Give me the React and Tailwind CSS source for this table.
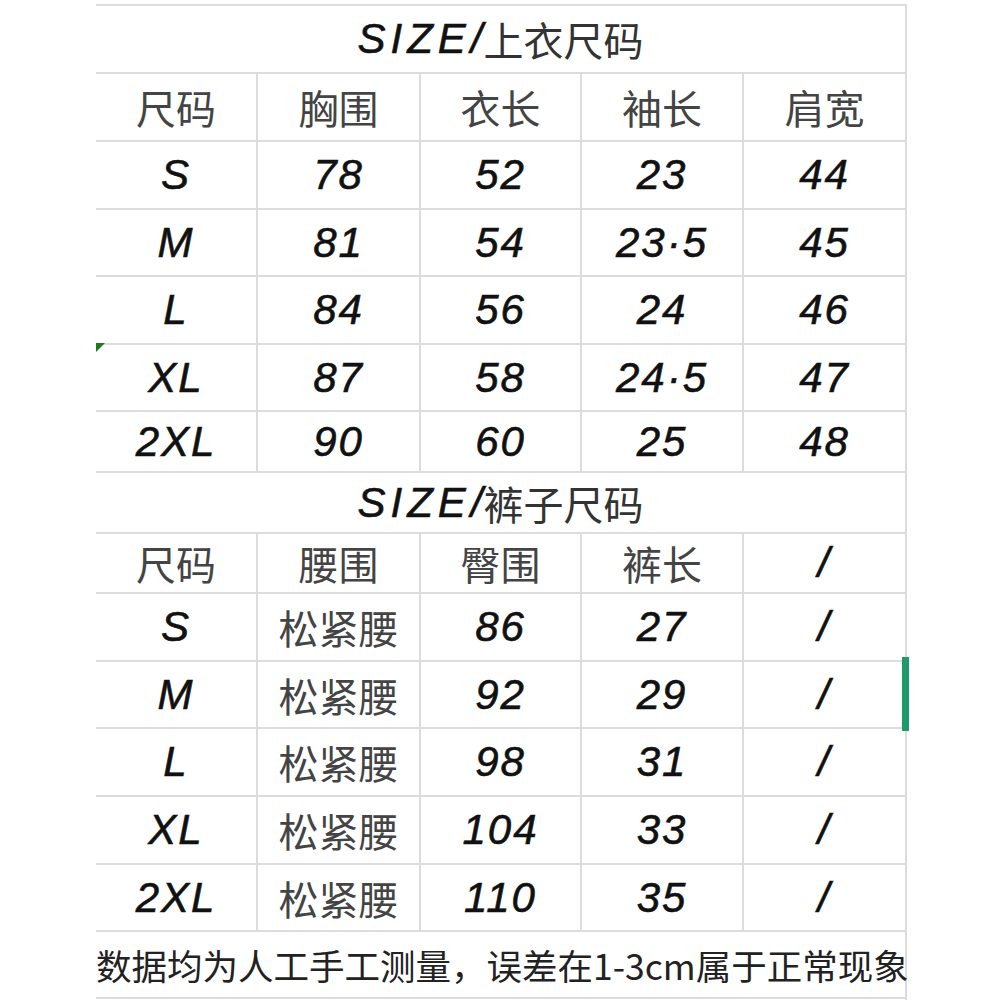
import React from "react";

const LATIN =
  "font-['Liberation_Sans',Arial,sans-serif] italic text-[42px] leading-none text-[#111] tracking-[2px] [-webkit-text-stroke:0.6px_#111]";
const CJK = "font-['Noto_Sans_CJK_SC','Noto_Sans',sans-serif] text-[40px] leading-none text-[#444]";

function Cell({ children, first, kind }) {
  return (
    <div
      className={`flex items-center justify-center border-b-2 border-[#dcdcdc] ${first ? "" : "border-l-2"} ${
        kind === "cjk" ? CJK : LATIN
      }`}
    >
      {children}
    </div>
  );
}

function Row({ h, cells }) {
  return (
    <div className={`grid grid-cols-[160px_163px_161px_162px_163px] ${h}`}>
      {cells.map((c, i) => (
        <Cell key={i} first={i === 0} kind={c.k}>
          {c.t}
        </Cell>
      ))}
    </div>
  );
}

function Title({ h, zh }) {
  return (
    <div className={`flex items-center justify-center border-b-2 border-[#dcdcdc] ${h}`}>
      <span className="font-['Liberation_Sans',Arial,sans-serif] italic text-[42px] leading-none text-[#111] tracking-[5px] mr-[-4px] [-webkit-text-stroke:0.6px_#111]">
        SIZE/
      </span>
      <span className="font-['Noto_Sans_CJK_SC','Noto_Sans',sans-serif] text-[40px] leading-none text-[#333]">{zh}</span>
    </div>
  );
}

const L = (t) => ({ t, k: "latin" });
const C = (t) => ({ t, k: "cjk" });

export default function App() {
  const top = [
    ["S", "78", "52", "23", "44", "h-[68px]"],
    ["M", "81", "54", "23·5", "45", "h-[67px]"],
    ["L", "84", "56", "24", "46", "h-[68px]"],
    ["XL", "87", "58", "24·5", "47", "h-[67px]"],
    ["2XL", "90", "60", "25", "48", "h-[61px]"],
  ];
  const bottom = [
    ["S", "86", "27", "h-[68px]"],
    ["M", "92", "29", "h-[67px]"],
    ["L", "98", "31", "h-[68px]"],
    ["XL", "104", "33", "h-[68px]"],
    ["2XL", "110", "35", "h-[67px]"],
  ];
  return (
    <div className="relative w-[1000px] h-[1000px] bg-white overflow-hidden">
      <div className="pl-[96px] pt-[4px]">
        <div className="w-[811px] h-[996px] border-t-2 border-r-2 border-[#dcdcdc]">
          <Title h="h-[68px]" zh="上衣尺码" />
          <Row h="h-[68px]" cells={[C("尺码"), C("胸围"), C("衣长"), C("袖长"), C("肩宽")]} />
          {top.map((r, i) => (
            <Row key={i} h={r[5]} cells={[L(r[0]), L(r[1]), L(r[2]), L(r[3]), L(r[4])]} />
          ))}
          <Title h="h-[61px]" zh="裤子尺码" />
          <Row h="h-[60px]" cells={[C("尺码"), C("腰围"), C("臀围"), C("裤长"), L("/")]} />
          {bottom.map((r, i) => (
            <Row key={i} h={r[3]} cells={[L(r[0]), C("松紧腰"), L(r[1]), L(r[2]), L("/")]} />
          ))}
          <div className="flex items-center border-b-2 border-[#dcdcdc] h-[67px]">
            <span className="whitespace-nowrap font-['Noto_Sans_CJK_SC','Noto_Sans',sans-serif] text-[35.5px] leading-none text-[#222]">
              数据均为人工手工测量，误差在1-3cm属于正常现象
            </span>
          </div>
        </div>
      </div>
      <div className="absolute left-[96px] top-[343px] w-0 h-0 border-t-[9px] border-r-[9px] border-t-[#1f7a1f] border-r-transparent" />
      <div className="absolute left-[902px] top-[657px] w-[7px] h-[74px] bg-[#1f9a6b]" />
    </div>
  );
}
